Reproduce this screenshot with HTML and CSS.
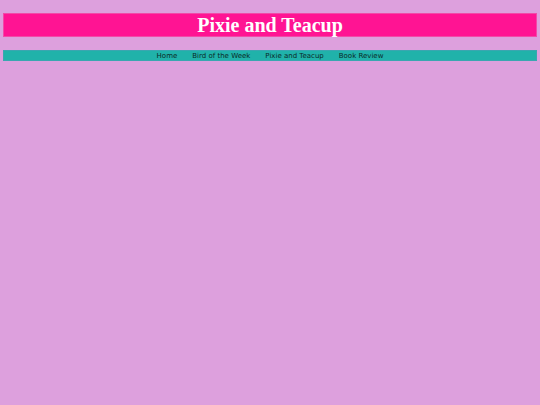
FILE: index.html
```html
<!DOCTYPE html>
<html>
<head>
<meta charset="utf-8">
<title>Pixie and Teacup</title>
<link rel="stylesheet" href="styles.css">
</head>
<body>
<header class="banner">
  <h1 class="title">Pixie and Teacup</h1>
</header>
<nav class="menu">
  <a class="menu-link" href="#">Home</a>
  <a class="menu-link" href="#">Bird of the Week</a>
  <a class="menu-link" href="#">Pixie and Teacup</a>
  <a class="menu-link" href="#">Book Review</a>
</nav>
</body>
</html>
```
FILE: styles.css
```css
html, body {
  margin: 0;
  padding: 0;
}
body {
  background: #dda0dd;
  padding: 13px 3px 0;
  min-height: 405px;
  box-sizing: border-box;
}
.banner {
  background: #ff1493;
  border: 1px solid #f24aa8;
  height: 24px;
  box-sizing: border-box;
  display: flex;
  align-items: center;
  justify-content: center;
}
.title {
  margin: 0;
  font-family: "Liberation Serif", serif;
  font-weight: bold;
  font-size: 20px;
  color: #fff;
  line-height: 1;
}
.menu {
  margin-top: 13px;
  background: #20b2aa;
  border: 1px solid #3aa6b0;
  height: 11px;
  box-sizing: border-box;
  padding-top: 1px;
  display: flex;
  justify-content: center;
  align-items: flex-start;
  gap: 15px;
}
.menu-link {
  font-family: "DejaVu Sans", sans-serif;
  font-size: 7px;
  color: #0a2a28;
  text-decoration: none;
  line-height: 8px;
}
```
